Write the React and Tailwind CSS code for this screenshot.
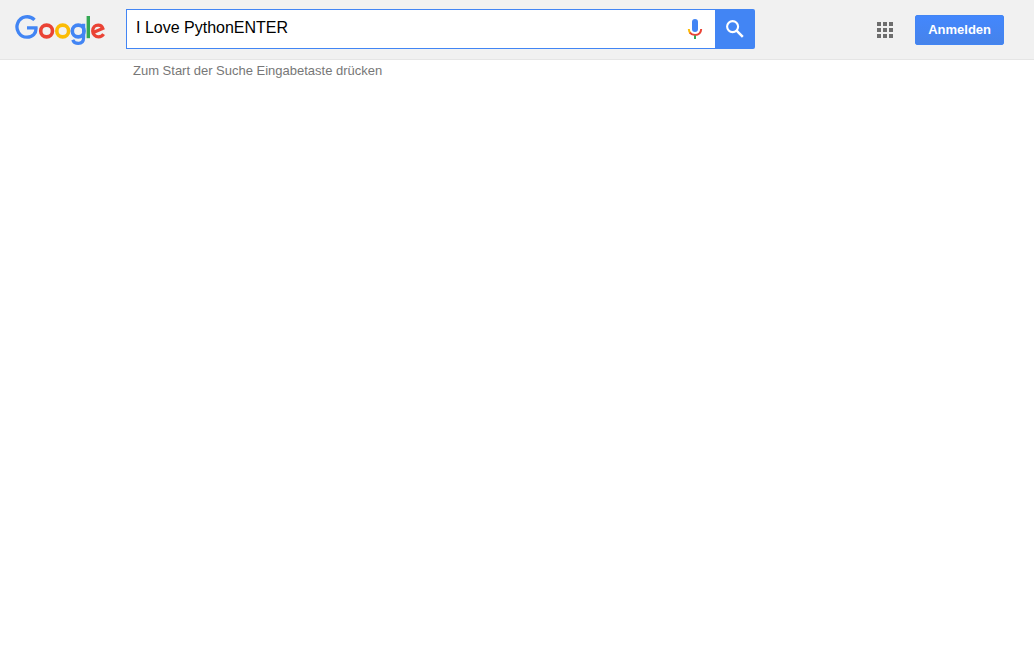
import React, { useState } from "react";

function GoogleLogo() {
  return (
    <svg width="92" height="32" viewBox="14 14 92 32" fill="none" strokeWidth="3.6" aria-hidden="true">
      <path d="M34.5 19.9A10.2 10.2 0 1 0 27 37.2C32.6 37.2 36.4 33.4 36 27.9H27" stroke="#4285f4" strokeWidth="3.3" />
      <circle cx="46.6" cy="31" r="5.9" stroke="#ea4335" />
      <circle cx="62.7" cy="31" r="5.9" stroke="#fbbc05" />
      <circle cx="78.2" cy="31" r="5.9" stroke="#4285f4" />
      <path d="M83.6 23.8V37.5C83.6 41.6 81.3 43.4 78.3 43.4C75.6 43.4 73.6 42 72.7 39.8" stroke="#4285f4" strokeWidth="3.2" />
      <path d="M88.3 16V38.2" stroke="#34a853" strokeWidth="3.4" />
      <path d="M103.6 34.2C102.5 35.9 100.8 36.9 98.6 36.9A5.9 5.9 0 0 1 92.7 31C92.7 27.4 95.2 25.1 98.2 25.1C100.5 25.1 102.1 26.3 102.8 28.4L93.3 32.4" stroke="#ea4335" strokeWidth="3.3" />
    </svg>
  );
}

function MicIcon() {
  return (
    <svg width="16" height="22" viewBox="0 0 16 22" fill="none" aria-hidden="true">
      <rect x="5" y="1" width="6" height="13" rx="3" fill="#4285f4" />
      <path d="M1.8 11C1.9 12.9 2.5 14.2 3.5 15.2" stroke="#fbbc05" strokeWidth="2" />
      <path d="M2.9 14.6C4 16.1 5.8 16.9 8 16.9C11.6 16.9 14 14.5 14.2 11" stroke="#ea4335" strokeWidth="2" />
      <path d="M8 17.5V21" stroke="#34a853" strokeWidth="2" />
    </svg>
  );
}

function SearchIcon() {
  return (
    <svg width="18" height="18" viewBox="0 0 18 18" fill="none" stroke="#fff" strokeWidth="2.1" aria-hidden="true">
      <circle cx="6.6" cy="6.6" r="5.5" />
      <path d="M10.6 10.6L16.8 16.8" strokeWidth="2.5" />
    </svg>
  );
}

function AppsIcon() {
  return (
    <svg width="16" height="16" viewBox="0 0 16 16" fill="#6e6e6e" aria-hidden="true">
      {[0, 6, 12].map((y) =>
        [0, 6, 12].map((x) => <rect key={`${x}-${y}`} x={x} y={y} width="4" height="4" />)
      )}
    </svg>
  );
}

export default function App() {
  const [query, setQuery] = useState("I Love PythonENTER");

  return (
    <div className="min-h-screen bg-white font-['Liberation_Sans',Arial,sans-serif]">
      <header className="flex h-15 items-center border-b border-[#e5e5e5] bg-[#f1f1f1] pr-[30px] pl-[14px]">
        <a href="#" aria-label="Google" className="mr-5 shrink-0">
          <GoogleLogo />
        </a>
        <form
          role="search"
          onSubmit={(e) => e.preventDefault()}
          className="mb-0.5 flex h-10 w-full max-w-[629px] min-w-0"
        >
          <div className="flex min-w-0 flex-1 items-center border border-r-0 border-[#4285f4] bg-white">
            <input
              type="text"
              aria-label="Suche"
              value={query}
              onChange={(e) => setQuery(e.target.value)}
              className="mb-0.5 h-full min-w-0 flex-1 bg-transparent pl-[9px] text-base text-black outline-none"
            />
            <button type="button" aria-label="Sprachsuche" className="mr-3 shrink-0">
              <MicIcon />
            </button>
          </div>
          <button
            type="submit"
            aria-label="Suchen"
            className="flex w-10 shrink-0 items-center justify-center rounded-r-xs bg-[#4285f4]"
          >
            <SearchIcon />
          </button>
        </form>
        <div className="ml-auto flex shrink-0 items-center gap-[22px] pl-6">
          <button type="button" aria-label="Google-Apps">
            <AppsIcon />
          </button>
          <a
            href="#"
            className="flex h-[30px] items-center rounded-xs border border-[#4285f4] bg-linear-to-b from-[#4387fd] to-[#4683ea] px-3 text-[13px] font-bold text-white"
          >
            Anmelden
          </a>
        </div>
      </header>
      <main className="pt-0.5 pl-[133px]">
        <p className="text-[13px] leading-[18px] text-[#777]">Zum Start der Suche Eingabetaste drücken</p>
      </main>
    </div>
  );
}
